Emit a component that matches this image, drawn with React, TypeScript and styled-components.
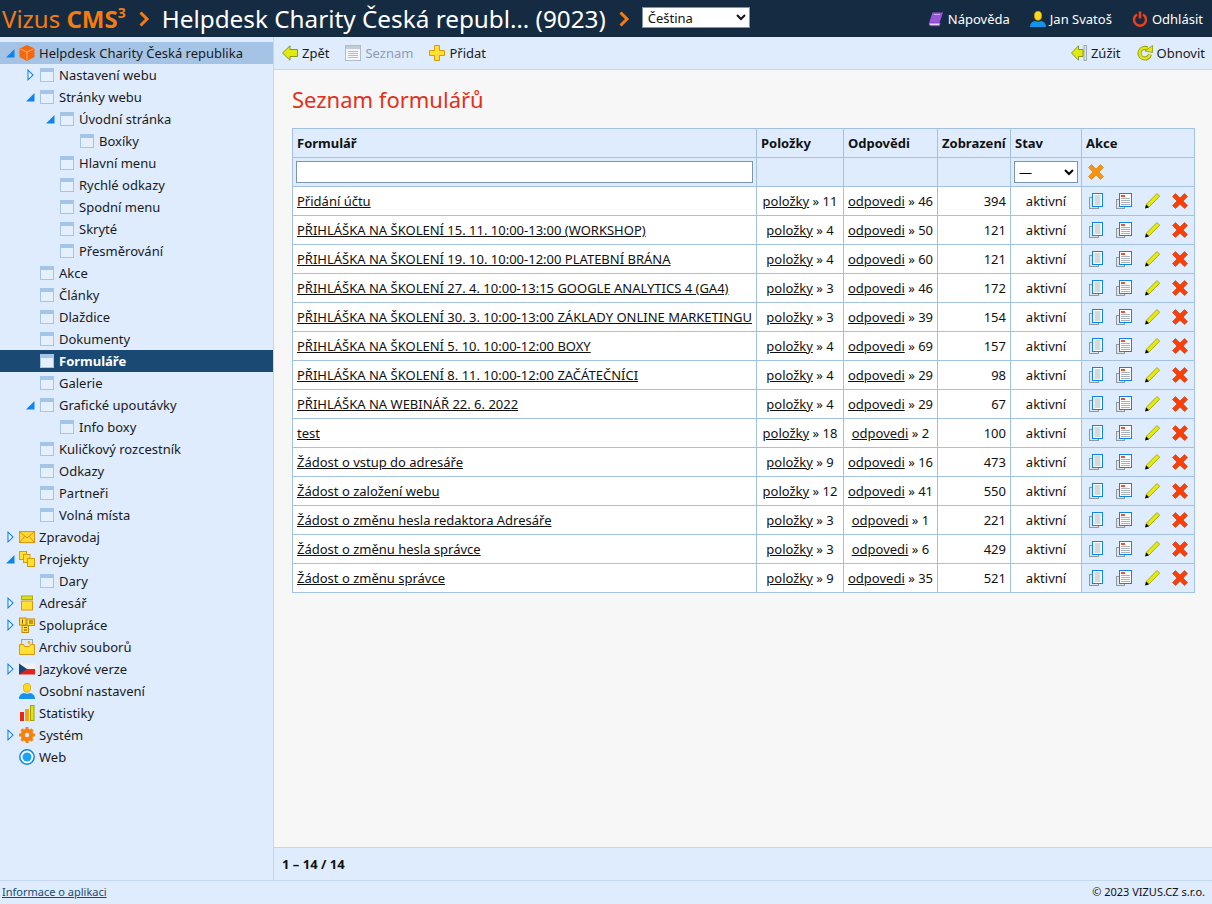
import React from 'react'
import styled, { createGlobalStyle } from 'styled-components'

const GlobalStyle = createGlobalStyle`
  html, body { margin: 0; padding: 0; height: 100%; }
  body { font-family: "Noto Sans", "Open Sans", sans-serif; font-size: 13px; color: #111; }
  #root { height: 100%; }
  * { box-sizing: border-box; }
`

const Page = styled.div`
  display: flex;
  flex-direction: column;
  height: 904px;
  overflow: hidden;
  background: #dfecfd;
`
const Header = styled.header`
  display: flex;
  align-items: center;
  height: 37px;
  flex: none;
  background: #152b42;
  padding: 0 9px 0 2px;
  color: #fff;
`
const Logo = styled.div`
  font-size: 24px;
  color: #f47b0f;
  white-space: nowrap;
  line-height: 37px;
  b { font-weight: 700; }
  sup { font-size: 14px; font-weight: 700; position: relative; top: -10px; line-height: 0; vertical-align: baseline; }
`
const Crumb = styled.svg<{ $right: number }>`
  width: 12px;
  height: 16px;
  flex: none;
  margin: 0 ${({ $right }) => $right}px 0 12px;
`
const SiteTitle = styled.div`
  font-size: 24.3px;
  line-height: 37px;
  white-space: nowrap;
  color: #fff;
`
const LangSelect = styled.select`
  width: 108px;
  height: 21px;
  margin: 0 0 3px 12px;
  font-family: inherit;
  font-size: 13px;
  color: #111;
  background: #fff;
  border: 1px solid #7d94ad;
  border-radius: 0;
  padding: 0 0 0 1px;
`
const HeaderLinks = styled.nav`
  display: flex;
  align-items: center;
  gap: 20px;
  margin-left: auto;
`
const HeaderLink = styled.a`
  display: flex;
  align-items: center;
  gap: 4px;
  color: #fff;
  font-size: 13px;
  text-decoration: none;
`
const Body = styled.div`
  display: flex;
  flex: 1;
  min-height: 0;
`
const Sidebar = styled.aside`
  width: 274px;
  flex: none;
  padding-top: 5px;
  background: #dfecfd;
  border-right: 1px solid #c3d7ee;
`
const TreeRow = styled.div<{ $level: number; $state?: 'root' | 'active' }>`
  display: flex;
  align-items: center;
  height: 22px;
  padding-left: ${({ $level }) => 5 + $level * 20}px;
  white-space: nowrap;
  font-weight: ${({ $state }) => ($state === 'active' ? 700 : 400)};
  color: ${({ $state }) => ($state === 'active' ? '#fff' : '#1a1a1a')};
  background: ${({ $state }) =>
    $state === 'active' ? '#1a4a73' : $state === 'root' ? '#a5c4e5' : 'transparent'};
`
const ArrowSlot = styled.span`
  display: flex;
  width: 14px;
  height: 16px;
  flex: none;
  align-items: center;
  padding-left: 1px;
`
const IconSlot = styled.span`
  display: flex;
  width: 16px;
  height: 16px;
  flex: none;
  margin-right: 4px;
  svg { display: block; }
`
const Main = styled.main`
  display: flex;
  flex-direction: column;
  flex: 1;
  min-width: 0;
  background: #f7f7f7;
`
const Toolbar = styled.div`
  display: flex;
  align-items: center;
  height: 33px;
  flex: none;
  padding: 0 7px 1px 8px;
  background: #dfecfd;
  border-bottom: 1px solid #c3d7ee;
`
const ToolLink = styled.a<{ $off?: boolean }>`
  display: flex;
  align-items: center;
  gap: 4px;
  margin-right: 16px;
  color: ${({ $off }) => ($off ? '#8d9db0' : '#1a1a1a')};
  text-decoration: none;
  white-space: nowrap;
`
const ToolSpacer = styled.div`
  flex: 1;
`
const ToolRight = styled(ToolLink)`
  margin-right: 0;
  margin-left: 16px;
`
const Content = styled.section`
  flex: 1;
  min-height: 0;
  padding: 0 17px 0 18px;
`
const Title = styled.h1`
  margin: 14px 0 13px;
  height: 31px;
  font-size: 22px;
  line-height: 31px;
  font-weight: 400;
  color: #e2301a;
`
const Table = styled.table`
  width: 902px;
  table-layout: fixed;
  border-collapse: collapse;
  background: #fff;
`
const HeadCell = styled.th`
  height: 29px;
  padding: 0 4px;
  text-align: left;
  font-weight: 700;
  background: #dfecfd;
  border: 1px solid #a3c1e2;
  white-space: nowrap;
`
const FilterCell = styled.td`
  height: 29px;
  padding: 0 3px;
  background: #dfecfd;
  border: 1px solid #a3c1e2;
`
const Cell = styled.td<{ $align?: 'left' | 'center' | 'right' }>`
  height: 29px;
  padding: 0 4px;
  text-align: ${({ $align }) => $align || 'left'};
  border: 1px solid #a3c1e2;
  white-space: nowrap;
  overflow: hidden;
  a { color: #111; text-decoration: underline; }
`
const ActionCell = styled(Cell)`
  background: #dfecfd;
  padding: 0 0 0 6px;
`
const Actions = styled.div`
  display: flex;
  gap: 12px;
  svg { display: block; }
`
const ClearFilter = styled(Actions)`
  margin-left: 3px;
`
const FilterInput = styled.input`
  display: block;
  width: 100%;
  height: 22px;
  background: #fff;
  border: 1px solid #7d94ad;
  border-radius: 0;
  padding: 0 2px;
`
const FilterSelect = styled.select`
  display: block;
  width: 64px;
  height: 22px;
  font-family: inherit;
  font-size: 13px;
  background: #fff;
  border: 1px solid #7d94ad;
  border-radius: 0;
`
const Pager = styled.div`
  display: flex;
  align-items: center;
  height: 33px;
  flex: none;
  padding: 0 8px;
  font-weight: 700;
  background: #dfecfd;
  border-top: 1px solid #c3d7ee;
`
const Footer = styled.footer`
  display: flex;
  align-items: center;
  justify-content: space-between;
  height: 24px;
  flex: none;
  padding: 0 7px 2px 2px;
  font-size: 11px;
  background: #dfecfd;
  border-top: 1px solid #c3d7ee;
  a { color: #1a4a73; text-decoration: underline; }
`

const Open = () => (
  <svg width="9" height="9" viewBox="0 0 9 9"><path d="M0 8.500h8.500V0z" fill="#0d84f0" /></svg>
)
const Closed = () => (
  <svg width="8" height="12" viewBox="0 0 8 12"><path d="M2 1.200v9.600L7 6z" fill="#fff" stroke="#1583ea" strokeWidth="1.100" /></svg>
)
const PageIcon = () => (
  <svg width="16" height="16" viewBox="0 0 16 16">
    <rect x="1.500" y="1.500" width="13" height="13" fill="#e6f0fc" stroke="#a3c6e8" />
    <rect x="1.500" y="1.500" width="13" height="3.500" fill="#a3c6e8" />
  </svg>
)
const Box = () => (
  <svg width="16" height="16" viewBox="0 0 16 16">
    <path d="M8 0l7.500 3.500v8.500L8 16 .5 12V3.500z" fill="#f4680f" />
    <path d="M1.500 4L8 7l6.500-3M8 7v8" fill="none" stroke="#fcc08e" strokeWidth=".8" />
  </svg>
)
const Mail = () => (
  <svg width="16" height="16" viewBox="0 0 16 16">
    <rect x=".5" y="2.500" width="15" height="11" fill="#fdd835" stroke="#e2930c" />
    <path d="M1 3l7 6 7-6M1 13l5-6M15 13l-5-6" fill="none" stroke="#e2930c" />
  </svg>
)
const Projects = () => (
  <svg width="16" height="16" viewBox="0 0 16 16">
    <rect x=".5" y=".5" width="7" height="8" fill="#ffe033" stroke="#d69a0c" />
    <rect x="4.500" y="3.500" width="6.500" height="8" fill="#ffe033" stroke="#d69a0c" />
    <rect x="8.500" y="7.500" width="7" height="8" fill="#ffe033" stroke="#d69a0c" />
  </svg>
)
const Address = () => (
  <svg width="16" height="16" viewBox="0 0 16 16">
    <rect x="2.500" y="1" width="11" height="3.500" fill="#d9e21a" stroke="#b3a90c" />
    <rect x="2.500" y="6" width="11" height="9" fill="#ffe033" stroke="#d69a0c" />
  </svg>
)
const Cooperation = () => (
  <svg width="16" height="16" viewBox="0 0 16 16">
    <rect x=".5" y="1" width="6.500" height="7" fill="#ffe033" stroke="#c9860a" />
    <rect x="8" y="2" width="7.500" height="6.500" fill="#ffe033" stroke="#c9860a" />
    <rect x="3" y="8.500" width="6.500" height="7" fill="#ffe033" stroke="#c9860a" />
    <path d="M3.500 2.500v4M10 4h4M10 6h4M5 10.500h3M5 13h3" stroke="#7a5a05" />
  </svg>
)
const Archive = () => (
  <svg width="16" height="16" viewBox="0 0 16 16">
    <rect x="2.500" y=".5" width="11" height="8" fill="#dfe7ee" stroke="#97a3ad" />
    <circle cx="10" cy="3.500" r="1.400" fill="#f0b10e" />
    <path d="M.5 5.500h4l1 2h5l1-2h4v10H.5z" fill="#ffe033" stroke="#d69a0c" />
  </svg>
)
const Flag = () => (
  <svg width="16" height="16" viewBox="0 0 16 16">
    <rect y="2.500" width="16" height="5.500" fill="#f2f2f2" />
    <rect y="8" width="16" height="5.500" fill="#e2231a" />
    <path d="M0 2.500L8 8l-8 5.500z" fill="#14477d" />
  </svg>
)
const Person = () => (
  <svg width="16" height="16" viewBox="0 0 16 16">
    <ellipse cx="8" cy="4.700" rx="3.600" ry="4.500" fill="#ffd919" stroke="#c99b08" strokeWidth=".7" />
    <path d="M0 16c0-4 2.500-5.500 5-6 1.500 1 4.500 1 6 0 2.500.5 5 2 5 6z" fill="#1593e8" />
  </svg>
)
const Stats = () => (
  <svg width="16" height="16" viewBox="0 0 16 16">
    <rect x="1" y="7" width="4" height="9" fill="#ea2a10" />
    <rect x="6" y="4" width="4" height="12" fill="#f6a50e" />
    <rect x="11.500" y=".5" width="3.500" height="15" fill="#e2e60e" stroke="#9ea00a" />
  </svg>
)
const Gear = () => (
  <svg width="16" height="16" viewBox="0 0 16 16">
    <circle cx="8" cy="8" r="4.500" fill="none" stroke="#f5820f" strokeWidth="3.600" />
    <path d="M8 0v16M0 8h16M2.400 2.400l11.200 11.200M13.600 2.400L2.400 13.600" stroke="#f5820f" strokeWidth="3" />
    <circle cx="8" cy="8" r="2.200" fill="#dfecfd" />
  </svg>
)
const Globe = () => (
  <svg width="16" height="16" viewBox="0 0 16 16">
    <circle cx="8" cy="8" r="7.200" fill="#fff" stroke="#0d84e8" strokeWidth="1.500" />
    <circle cx="8" cy="8" r="4.500" fill="#19a5f5" />
  </svg>
)
const Book = () => (
  <svg width="16" height="16" viewBox="0 0 16 16">
    <path d="M4.500 1.500H15L11.500 12H1z" fill="#9a56d8" />
    <path d="M1 12c0 2 .8 2.800 2 2.800h8.500l.7-2.800H1z" fill="#e6d5f5" stroke="#7a38b8" strokeWidth=".8" />
    <path d="M6 3.500h6" stroke="#c9a2ec" />
  </svg>
)
const Power = () => (
  <svg width="16" height="16" viewBox="0 0 16 16">
    <path d="M5 3.500a6 6 0 1 0 6 0" fill="none" stroke="#f0401a" strokeWidth="2.400" />
    <path d="M8 .5v7" stroke="#f0401a" strokeWidth="2.600" />
  </svg>
)
const Back = () => (
  <svg width="16" height="16" viewBox="0 0 16 16">
    <path d="M8 .8L.5 8 8 15.200V11.500h7.500v-7H8z" fill="#e0ea10" stroke="#7f8f0a" strokeWidth=".9" />
  </svg>
)
const ListIcon = () => (
  <svg width="16" height="16" viewBox="0 0 16 16">
    <rect x=".5" y=".5" width="15" height="15" fill="#f4f6f8" stroke="#b3bcc4" />
    <rect x="1" y="1" width="14" height="3" fill="#c5cdd4" />
    <path d="M3 6.500h10M3 8.500h10M3 10.500h10M3 12.500h10" stroke="#b3bcc4" />
  </svg>
)
const Plus = () => (
  <svg width="16" height="16" viewBox="0 0 16 16">
    <path d="M5.500.5h5v5h5v5h-5v5h-5v-5h-5v-5h5z" fill="#ffe033" stroke="#d89a0c" />
  </svg>
)
const Shrink = () => (
  <svg width="16" height="16" viewBox="0 0 16 16">
    <path d="M7.500 .8L.5 8l7 7.200V11.500H12v-7H7.500z" fill="#e0ea10" stroke="#7f8f0a" strokeWidth=".9" />
    <rect x="13" y=".5" width="2.500" height="15" fill="#dfe4e8" stroke="#8f989f" strokeWidth=".8" />
  </svg>
)
const Refresh = () => (
  <svg width="16" height="16" viewBox="0 0 16 16">
    <path d="M10.500 3.600A5.300 5.300 0 1 0 13 9.500" fill="none" stroke="#8f970a" strokeWidth="4" />
    <path d="M10.500 3.600A5.300 5.300 0 1 0 13 9.500" fill="none" stroke="#e0ea10" strokeWidth="2.400" />
    <path d="M8 6l7.500 1.500V.5z" fill="#e0ea10" stroke="#8f970a" strokeWidth=".8" />
  </svg>
)
const Copy = () => (
  <svg width="16" height="16" viewBox="0 0 16 16">
    <rect x="1.500" y="4.500" width="9" height="11" fill="#dfe4e8" stroke="#8f989f" />
    <rect x="4.500" y=".5" width="10" height="13" fill="#fff" stroke="#0d84e8" />
    <path d="M6.500 3h6M6.500 5h6M6.500 7h6M6.500 9h6M6.500 11h6" stroke="#a8b2bb" />
  </svg>
)
const Detail = () => (
  <svg width="16" height="16" viewBox="0 0 16 16">
    <rect x=".5" y="6.500" width="8" height="9" fill="#dfe4e8" stroke="#8f989f" />
    <rect x="3.500" y=".5" width="12" height="13" fill="#fff" stroke="#0d84e8" />
    <rect x="5" y="2" width="4" height="2" fill="#f0502a" />
    <path d="M5 5.500h9M5 7.500h9M5 9.500h9M5 11.500h9" stroke="#a8b2bb" />
  </svg>
)
const Pencil = () => (
  <svg width="16" height="16" viewBox="0 0 16 16">
    <path d="M13 .5l2.700 2.700L5 14 2.300 11.300z" fill="#e3ea0c" stroke="#98a00a" strokeWidth=".8" />
    <path d="M1 15.500l1-4 3 3z" fill="#000" />
  </svg>
)
const Cross = ({ color = '#fa3f07', edge = '#c93305' }: { color?: string; edge?: string }) => (
  <svg width="16" height="16" viewBox="0 0 16 16">
    <path
      d="M3.500.5L8 5l4.500-4.500 3 3L11 8l4.500 4.500-3 3L8 11l-4.500 4.500-3-3L5 8 .5 3.500z"
      fill={color}
      stroke={edge}
      strokeWidth=".6"
    />
  </svg>
)

type Node = {
  label: string
  level: number
  arrow?: 'open' | 'closed'
  icon?: React.ReactNode
  state?: 'root' | 'active'
}

const tree: Node[] = [
  { label: 'Helpdesk Charity Česká republika', level: 0, arrow: 'open', icon: <Box />, state: 'root' },
  { label: 'Nastavení webu', level: 1, arrow: 'closed' },
  { label: 'Stránky webu', level: 1, arrow: 'open' },
  { label: 'Úvodní stránka', level: 2, arrow: 'open' },
  { label: 'Boxíky', level: 3 },
  { label: 'Hlavní menu', level: 2 },
  { label: 'Rychlé odkazy', level: 2 },
  { label: 'Spodní menu', level: 2 },
  { label: 'Skryté', level: 2 },
  { label: 'Přesměrování', level: 2 },
  { label: 'Akce', level: 1 },
  { label: 'Články', level: 1 },
  { label: 'Dlaždice', level: 1 },
  { label: 'Dokumenty', level: 1 },
  { label: 'Formuláře', level: 1, state: 'active' },
  { label: 'Galerie', level: 1 },
  { label: 'Grafické upoutávky', level: 1, arrow: 'open' },
  { label: 'Info boxy', level: 2 },
  { label: 'Kuličkový rozcestník', level: 1 },
  { label: 'Odkazy', level: 1 },
  { label: 'Partneři', level: 1 },
  { label: 'Volná místa', level: 1 },
  { label: 'Zpravodaj', level: 0, arrow: 'closed', icon: <Mail /> },
  { label: 'Projekty', level: 0, arrow: 'open', icon: <Projects /> },
  { label: 'Dary', level: 1 },
  { label: 'Adresář', level: 0, arrow: 'closed', icon: <Address /> },
  { label: 'Spolupráce', level: 0, arrow: 'closed', icon: <Cooperation /> },
  { label: 'Archiv souborů', level: 0, icon: <Archive /> },
  { label: 'Jazykové verze', level: 0, arrow: 'closed', icon: <Flag /> },
  { label: 'Osobní nastavení', level: 0, icon: <Person /> },
  { label: 'Statistiky', level: 0, icon: <Stats /> },
  { label: 'Systém', level: 0, arrow: 'closed', icon: <Gear /> },
  { label: 'Web', level: 0, icon: <Globe /> },
]

const forms: [string, number, number, number][] = [
  ['Přidání účtu', 11, 46, 394],
  ['PŘIHLÁŠKA NA ŠKOLENÍ 15. 11. 10:00-13:00 (WORKSHOP)', 4, 50, 121],
  ['PŘIHLÁŠKA NA ŠKOLENÍ 19. 10. 10:00-12:00 PLATEBNÍ BRÁNA', 4, 60, 121],
  ['PŘIHLÁŠKA NA ŠKOLENÍ 27. 4. 10:00-13:15 GOOGLE ANALYTICS 4 (GA4)', 3, 46, 172],
  ['PŘIHLÁŠKA NA ŠKOLENÍ 30. 3. 10:00-13:00 ZÁKLADY ONLINE MARKETINGU', 3, 39, 154],
  ['PŘIHLÁŠKA NA ŠKOLENÍ 5. 10. 10:00-12:00 BOXY', 4, 69, 157],
  ['PŘIHLÁŠKA NA ŠKOLENÍ 8. 11. 10:00-12:00 ZAČÁTEČNÍCI', 4, 29, 98],
  ['PŘIHLÁŠKA NA WEBINÁŘ 22. 6. 2022', 4, 29, 67],
  ['test', 18, 2, 100],
  ['Žádost o vstup do adresáře', 9, 16, 473],
  ['Žádost o založení webu', 12, 41, 550],
  ['Žádost o změnu hesla redaktora Adresáře', 3, 1, 221],
  ['Žádost o změnu hesla správce', 3, 6, 429],
  ['Žádost o změnu správce', 9, 35, 521],
]

export default function App() {
  return (
    <>
      <GlobalStyle />
      <Page>
        <Header>
          <Logo>
            Vizus <b>CMS</b>
            <sup>3</sup>
          </Logo>
          <Crumb $right={12} viewBox="0 0 12 16">
            <path d="M2.500 1.500L9 8l-6.500 6.500" fill="none" stroke="#f47b0f" strokeWidth="3" />
          </Crumb>
          <SiteTitle>Helpdesk Charity Česká republ… (9023)</SiteTitle>
          <Crumb $right={0} viewBox="0 0 12 16">
            <path d="M2.500 1.500L9 8l-6.500 6.500" fill="none" stroke="#f47b0f" strokeWidth="3" />
          </Crumb>
          <LangSelect defaultValue="cs">
            <option value="cs">Čeština</option>
          </LangSelect>
          <HeaderLinks>
            <HeaderLink href="#"><Book />Nápověda</HeaderLink>
            <HeaderLink href="#"><Person />Jan Svatoš</HeaderLink>
            <HeaderLink href="#"><Power />Odhlásit</HeaderLink>
          </HeaderLinks>
        </Header>
        <Body>
          <Sidebar>
            {tree.map((n) => (
              <TreeRow key={n.label} $level={n.level} $state={n.state}>
                <ArrowSlot>
                  {n.arrow === 'open' && <Open />}
                  {n.arrow === 'closed' && <Closed />}
                </ArrowSlot>
                <IconSlot>{n.icon || <PageIcon />}</IconSlot>
                {n.label}
              </TreeRow>
            ))}
          </Sidebar>
          <Main>
            <Toolbar>
              <ToolLink href="#"><Back />Zpět</ToolLink>
              <ToolLink href="#" $off><ListIcon />Seznam</ToolLink>
              <ToolLink href="#"><Plus />Přidat</ToolLink>
              <ToolSpacer />
              <ToolRight href="#"><Shrink />Zúžit</ToolRight>
              <ToolRight href="#"><Refresh />Obnovit</ToolRight>
            </Toolbar>
            <Content>
              <Title>Seznam formulářů</Title>
              <Table>
                <colgroup>
                  <col style={{ width: 464 }} />
                  <col style={{ width: 87 }} />
                  <col style={{ width: 94 }} />
                  <col style={{ width: 73 }} />
                  <col style={{ width: 71 }} />
                  <col style={{ width: 113 }} />
                </colgroup>
                <thead>
                  <tr>
                    <HeadCell>Formulář</HeadCell>
                    <HeadCell>Položky</HeadCell>
                    <HeadCell>Odpovědi</HeadCell>
                    <HeadCell>Zobrazení</HeadCell>
                    <HeadCell>Stav</HeadCell>
                    <HeadCell>Akce</HeadCell>
                  </tr>
                  <tr>
                    <FilterCell><FilterInput /></FilterCell>
                    <FilterCell />
                    <FilterCell />
                    <FilterCell />
                    <FilterCell>
                      <FilterSelect defaultValue="">
                        <option value="">—</option>
                      </FilterSelect>
                    </FilterCell>
                    <FilterCell>
                      <ClearFilter><Cross color="#f8930f" edge="#cf7a08" /></ClearFilter>
                    </FilterCell>
                  </tr>
                </thead>
                <tbody>
                  {forms.map(([name, items, answers, views]) => (
                    <tr key={name}>
                      <Cell><a href="#">{name}</a></Cell>
                      <Cell $align="center"><a href="#">položky</a> » {items}</Cell>
                      <Cell $align="center"><a href="#">odpovedi</a> » {answers}</Cell>
                      <Cell $align="right">{views}</Cell>
                      <Cell $align="center">aktivní</Cell>
                      <ActionCell>
                        <Actions>
                          <Copy />
                          <Detail />
                          <Pencil />
                          <Cross />
                        </Actions>
                      </ActionCell>
                    </tr>
                  ))}
                </tbody>
              </Table>
            </Content>
            <Pager>1 – 14 / 14</Pager>
          </Main>
        </Body>
        <Footer>
          <a href="#">Informace o aplikaci</a>
          <span>© 2023 VIZUS.CZ s.r.o.</span>
        </Footer>
      </Page>
    </>
  )
}
